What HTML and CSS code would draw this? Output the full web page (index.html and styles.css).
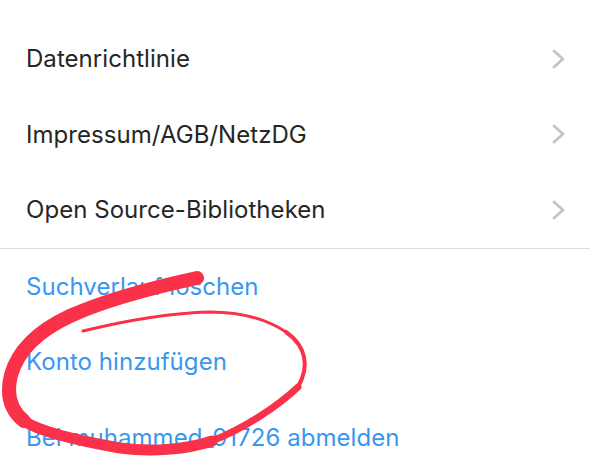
FILE: index.html
```html
<!DOCTYPE html>
<html lang="de">
<head>
<meta charset="utf-8">
<title>Einstellungen</title>
<link rel="stylesheet" href="styles.css">
</head>
<body>
<div class="page">
  <ul class="list">
    <li class="row"><span class="label">Datenrichtlinie</span><svg class="chev" viewBox="0 0 13 20" width="13" height="20"><path d="M2 2 L11 10 L2 18" /></svg></li>
    <li class="row"><span class="label">Impressum/AGB/NetzDG</span><svg class="chev" viewBox="0 0 13 20" width="13" height="20"><path d="M2 2 L11 10 L2 18" /></svg></li>
    <li class="row"><span class="label">Open Source-Bibliotheken</span><svg class="chev" viewBox="0 0 13 20" width="13" height="20"><path d="M2 2 L11 10 L2 18" /></svg></li>
  </ul>
  <ul class="list links">
    <li class="row link">Suchverlauf löschen</li>
    <li class="row link">Konto hinzufügen</li>
    <li class="row link">Bei muhammed_91726 abmelden</li>
  </ul>
  <svg class="scribble" viewBox="0 0 590 467" width="590" height="467">
    <g fill="none" stroke="#f9324a" stroke-linecap="round" stroke-linejoin="round">
      <path stroke-width="14" d="M197,278 C160,286 110,298 70,316 C40,330 18,350 11,375 C6,395 10,410 24,421" />
      <path stroke-width="11" d="M24,421 C40,432 80,441 120,448 C150,452 185,450 212,441" />
      <path stroke-width="7" d="M212,441 C245,428 278,406 298,387" />
      <path stroke-width="4" d="M298,387 C310,366 306,346 286,332" />
      <path stroke-width="3" d="M286,332 C265,318 240,312 210,312 C170,313 120,322 83,331" />
    </g>
  </svg>
</div>
</body>
</html>
```
FILE: styles.css
```css
html, body {
  margin: 0;
  padding: 0;
  background: #ffffff;
}
.page {
  position: relative;
  width: 590px;
  height: 467px;
  overflow: hidden;
  font-family: Inter, "Noto Sans", sans-serif;
  padding-top: 21px;
  box-sizing: border-box;
}
.list {
  list-style: none;
  margin: 0;
  padding: 0;
}
.links {
  border-top: 1px solid #dbdbdb;
}
.row {
  height: 75.5px;
  display: flex;
  align-items: center;
  justify-content: space-between;
  padding: 0 25px 0 26px;
  font-size: 24px;
  color: #262626;
  letter-spacing: 0.05px;
}
.link {
  color: #3897f0;
}
.chev {
  display: block;
}
.chev path {
  fill: none;
  stroke: #c4c4c8;
  stroke-width: 2.8;
  stroke-linecap: round;
  stroke-linejoin: round;
}
.scribble {
  position: absolute;
  left: 0;
  top: 0;
  pointer-events: none;
}
```
